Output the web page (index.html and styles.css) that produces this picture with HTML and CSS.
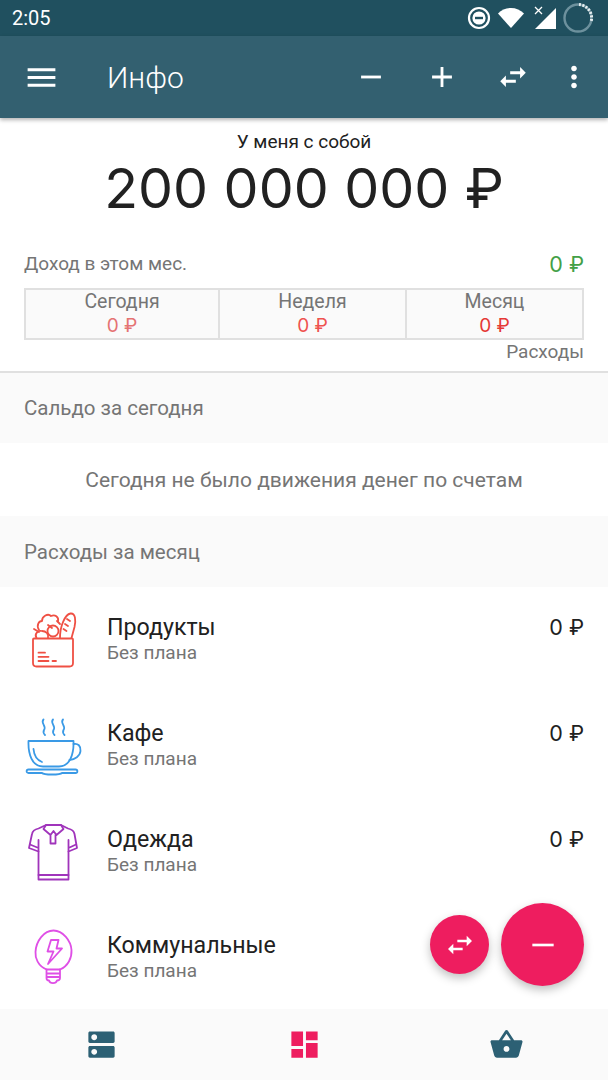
FILE: index.html
```html
<!DOCTYPE html>
<html lang="ru">
<head>
    <meta charset="UTF-8">
    <meta name="viewport" content="width=device-width, initial-scale=1.0">
    <title>Инфо</title>
    <link rel="stylesheet" href="styles.css">
</head>
<body>
<div class="screen">
    <div class="status-bar">
        <span class="clock">2:05</span>
        <div class="status-icons">
            <svg class="st-dnd" width="24" height="24" viewBox="0 0 24 24"><circle cx="12" cy="12" r="10" fill="none" stroke="#fff" stroke-width="2.2"/><circle cx="12" cy="12" r="6.6" fill="#fff"/><rect x="8" y="10.8" width="8" height="2.4" fill="#20505f"/></svg>
            <svg class="st-wifi" width="28" height="22" viewBox="0 0 28 22"><path d="M1 6.5C4.500 3 9 1 14 1s9.500 2 13 5.500L14 21z" fill="#fff"/></svg>
            <svg class="st-signal" width="24" height="26" viewBox="0 0 24 26"><path d="M23 3v21H2z" fill="#fff"/><path d="M2 2l7 7M9 2l-7 7" stroke="#20505f" stroke-width="3.500"/><path d="M2 2l7 7M9 2l-7 7" stroke="#fff" stroke-width="1.300"/></svg>
            <svg class="st-load" width="32" height="32" viewBox="0 0 32 32"><circle cx="16" cy="16" r="13.500" fill="none" stroke="#6d919d" stroke-width="2.400"/><path d="M17 2.500A13.500 13.500 0 0 1 29 20" fill="none" stroke="#e6eef0" stroke-width="3" stroke-dasharray="2 1.500"/></svg>
        </div>
    </div>

    <header class="app-bar">
        <button class="bar-btn menu-btn"><svg width="37" height="37" viewBox="0 0 24 24"><path d="M3 18h18v-2H3v2zm0-5h18v-2H3v2zm0-7v2h18V6H3z"/></svg></button>
        <h1 class="bar-title">Инфо</h1>
        <div class="bar-actions">
            <button class="bar-btn"><svg width="34" height="34" viewBox="0 0 24 24"><path d="M5 11h14v2H5z"/></svg></button>
            <button class="bar-btn"><svg width="34" height="34" viewBox="0 0 24 24"><path d="M19 13h-6v6h-2v-6H5v-2h6V5h2v6h6v2z"/></svg></button>
            <button class="bar-btn"><svg width="34" height="34" viewBox="0 0 24 24"><path d="M6.990 11L3 15l3.990 4v-3H14v-2H6.990v-3zM21 9l-3.990-4v3H10v2h7.010v3L21 9z"/></svg></button>
            <button class="bar-btn more-btn"><svg width="34" height="34" viewBox="0 0 24 24"><path d="M12 8c1.100 0 2-.9 2-2s-.9-2-2-2-2 .9-2 2 .9 2 2 2zm0 2c-1.100 0-2 .9-2 2s.9 2 2 2 2-.9 2-2-.9-2-2-2zm0 6c-1.100 0-2 .9-2 2s.9 2 2 2 2-.9 2-2-.9-2-2-2z"/></svg></button>
        </div>
    </header>

    <main class="content">
        <section class="summary">
            <div class="summary-label">У меня с собой</div>
            <div class="summary-total">200 000 000 ₽</div>
            <div class="income">
                <span>Доход в этом мес.</span>
                <span class="income-value">0 ₽</span>
            </div>
            <div class="periods">
                <div class="period period-day">
                    <div>Сегодня</div>
                    <div class="period-value">0 ₽</div>
                </div>
                <div class="period period-week">
                    <div>Неделя</div>
                    <div class="period-value">0 ₽</div>
                </div>
                <div class="period period-month">
                    <div>Месяц</div>
                    <div class="period-value">0 ₽</div>
                </div>
            </div>
            <div class="periods-caption">Расходы</div>
        </section>

        <h2 class="section-head section-head-top">Сальдо за сегодня</h2>
        <div class="empty-note">Сегодня не было движения денег по счетам</div>
        <h2 class="section-head">Расходы за месяц</h2>

        <div class="cat-list">
            <div class="cat-row">
                <svg class="cat-icon" width="60" height="60" viewBox="0 0 60 60" stroke="#ef5044">
                    <path d="M10 28.500c-.6 0-1 .5-1 1V53c0 2 1.500 3.500 3.500 3.500h33c2 0 3.500-1.500 3.500-3.500V29.500c0-.5-.4-1-1-1z"/>
                    <path d="M14.500 42.700H21M14.500 46.800H24.500M14.500 51H24.500M28.500 51H32"/>
                    <path d="M36 28C36 16 41 4.500 46.500 3.500C51.500 3 52 10 50.500 17L47.500 28"/>
                    <path d="M43 9l3 2M41 14l3 2M39.500 19l3 2"/>
                    <path d="M10 19l5 3M12.500 28C10 24 14 20 18 21C22 21 25 24 24 28"/>
                    <path d="M15 20C12 15 15 11 18 11C18 6 24 3 27 6C31 4 35 7 34 11"/>
                    <circle cx="29" cy="21" r="5.500"/>
                    <path d="M24 15l4 3M33 11l3 3"/>
                </svg>
                <div class="cat-text">
                    <div class="cat-name">Продукты</div>
                    <div class="cat-plan">Без плана</div>
                </div>
                <div class="cat-sum">0 ₽</div>
            </div>
            <div class="cat-row">
                <svg class="cat-icon" width="60" height="60" viewBox="0 0 60 60" stroke="#3a9ae6">
                    <path d="M4.500 25H49.500C50 38 46 50.500 35 50.500H19C8 50.500 4 38 4.500 25z"/>
                    <path d="M49.500 28C54 27 57 30 56.500 35C56 40 51 43.500 45.500 44"/>
                    <path d="M9.500 33C10 39 13 44 18 46"/>
                    <path d="M4.500 53.500H51.500C54 53.500 54 57 51.500 57H38C36 59 20 59 18 57H4.500C2 57 2 53.500 4.500 53.500z"/>
                    <path d="M19.500 3.500C16 7 23 10 20 14C19 16 20 18 21 19M29 3.500C25.500 7 32.500 10 29.500 14C28.500 16 29.500 18 30.500 19M39 3.500C35.500 7 42.500 10 39.500 14C38.500 16 39.500 18 40.500 19"/>
                </svg>
                <div class="cat-text">
                    <div class="cat-name">Кафе</div>
                    <div class="cat-plan">Без плана</div>
                </div>
                <div class="cat-sum">0 ₽</div>
            </div>
            <div class="cat-row">
                <svg class="cat-icon" width="60" height="60" viewBox="0 0 60 60" stroke="#a034bb">
                    <path d="M22 3H37L44 6.500C48 7.500 50 9 50.500 12L53 26L44.500 29.500V57.500H14.500V29.500L5 26L8 12C8.500 9 10.500 7.500 14.500 6.500z"/>
                    <path d="M14.500 18V29.500M44.500 18V29.500M14.500 53H44.500M6 22.500L14.500 26M52 22.500L44.500 26"/>
                    <path d="M22 3L19.500 7L26.500 13L29.500 9L32.500 13L39.500 7L37 3M26.500 13V21.500H31.500V13"/>
                </svg>
                <div class="cat-text">
                    <div class="cat-name">Одежда</div>
                    <div class="cat-plan">Без плана</div>
                </div>
                <div class="cat-sum">0 ₽</div>
            </div>
            <div class="cat-row">
                <svg class="cat-icon" width="60" height="60" viewBox="0 0 60 60" stroke="#df4fe6">
                    <path d="M22.500 41.500C14 38 11 30 11.500 24C12 13 20 2.500 29.500 2.500C39 2.500 47 13 47.500 22C48 30 44 38 36 41.500z"/>
                    <path d="M22.500 41.500V50C22.500 52 24 52.500 25 52.500C26 56 32 56 33 52.500C35 52.500 36 52 36 50V41.500M22.500 45.500H36M22.500 49H36"/>
                    <path d="M34.500 12H27L23.500 23.500H29.500L24 36L38 20.500H32.500z"/>
                </svg>
                <div class="cat-text">
                    <div class="cat-name">Коммунальные</div>
                    <div class="cat-plan">Без плана</div>
                </div>
            </div>
        </div>

        <button class="fab fab-small"><svg width="32" height="32" viewBox="0 0 24 24"><path d="M6.990 11L3 15l3.990 4v-3H14v-2H6.990v-3zM21 9l-3.990-4v3H10v2h7.010v3L21 9z"/></svg></button>
        <button class="fab fab-big"><svg width="32" height="32" viewBox="0 0 24 24"><path d="M4 11h16v2H4z"/></svg></button>
    </main>

    <nav class="bottom-nav">
        <div class="nav-item"><svg width="35" height="35" viewBox="0 0 24 24"><path d="M20 13H4c-.55 0-1 .45-1 1v6c0 .55.45 1 1 1h16c.55 0 1-.45 1-1v-6c0-.55-.45-1-1-1zM7 19c-1.100 0-2-.9-2-2s.9-2 2-2 2 .9 2 2-.9 2-2 2zM20 3H4c-.55 0-1 .45-1 1v6c0 .55.45 1 1 1h16c.55 0 1-.45 1-1V4c0-.55-.45-1-1-1zM7 9c-1.100 0-2-.9-2-2s.9-2 2-2 2 .9 2 2-.9 2-2 2z"/></svg></div>
        <div class="nav-item nav-active"><svg width="35" height="35" viewBox="0 0 24 24"><path d="M3 13h8V3H3v10zm0 8h8v-6H3v6zm10 0h8V11h-8v10zm0-18v6h8V3h-8z"/></svg></div>
        <div class="nav-item"><svg width="35" height="35" viewBox="0 0 24 24"><path d="M17.210 9l-4.380-6.560c-.19-.28-.51-.42-.83-.42-.32 0-.64.14-.83.43L6.790 9H2c-.55 0-1 .45-1 1 0 .09.01.18.04.27l2.540 9.270c.23.84 1 1.460 1.920 1.460h13c.92 0 1.690-.62 1.930-1.460l2.540-9.270L23 10c0-.55-.45-1-1-1h-4.790zM9 9l3-4.400L15 9H9zm3 8c-1.100 0-2-.9-2-2s.9-2 2-2 2 .9 2 2-.9 2-2 2z"/></svg></div>
    </nav>
</div>
</body>
</html>
```

FILE: styles.css
```css
body {
    margin: 0;
    background: #fff;
    font-family: Roboto, "Noto Sans", sans-serif;
}
.screen {
    display: flex;
    flex-direction: column;
    height: 1080px;
    overflow: hidden;
}

/* Status bar */
.status-bar {
    display: flex;
    align-items: center;
    justify-content: space-between;
    height: 36px;
    padding: 0 14px 0 12px;
    background: #20505f;
    color: #fff;
    flex-shrink: 0;
}
.clock {
    font-size: 20px;
}
.status-icons {
    display: flex;
    align-items: center;
}
.st-wifi {
    margin-left: 6px;
}
.st-signal {
    margin-left: 8px;
}
.st-load {
    margin-left: 5px;
}

/* App bar */
.app-bar {
    display: flex;
    align-items: center;
    height: 82px;
    background: #336070;
    box-shadow: 0 2px 4px rgba(0,0,0,0.3);
    flex-shrink: 0;
    position: relative;
    z-index: 2;
}
.bar-btn {
    display: flex;
    align-items: center;
    justify-content: center;
    width: 71px;
    padding: 0;
    background: none;
    border: none;
}
.bar-btn svg {
    fill: #fff;
}
.menu-btn {
    width: 37px;
    margin-left: 23px;
}
.bar-title {
    margin: 0 0 0 47px;
    font-size: 30px;
    font-weight: 300;
    color: #fff;
    flex: 1;
}
.bar-actions {
    display: flex;
    margin-right: 8px;
}
.more-btn {
    width: 53px;
    margin-left: -1px;
}

/* Main content */
.content {
    flex: 1;
    position: relative;
    min-height: 0;
    display: flex;
    flex-direction: column;
}
.summary {
    padding: 12px 24px 0;
    border-bottom: 2px solid #e0e0e0;
    height: 255px;
    box-sizing: border-box;
    flex-shrink: 0;
}
.summary-label {
    text-align: center;
    font-size: 19px;
    line-height: 24px;
    color: #212121;
}
.summary-total {
    text-align: center;
    font-family: Inter, Roboto, sans-serif;
    font-size: 55.500px;
    line-height: 68px;
    color: #212121;
}
.income {
    display: flex;
    justify-content: space-between;
    margin-top: 30px;
    font-size: 19px;
    line-height: 24px;
    color: #757575;
}
.income-value {
    font-family: Inter, Roboto, sans-serif;
    color: #43a047;
    font-size: 21.500px;
}
.periods {
    display: flex;
    margin-top: 12px;
    height: 52px;
    box-sizing: border-box;
    border: 2px solid #e0e0e0;
    background: #fafafa;
}
.period {
    text-align: center;
    font-size: 19.500px;
    line-height: 24px;
    color: #757575;
    border-right: 2px solid #e0e0e0;
}
.period:last-child {
    border-right: none;
}
.period-day {
    width: 192px;
}
.period-week {
    width: 185px;
}
.period-month {
    flex: 1;
}
.period-value {
    font-family: Inter, Roboto, sans-serif;
    font-size: 19px;
}
.period-day .period-value {
    color: #e57373;
}
.period-week .period-value {
    color: #ef5350;
}
.period-month .period-value {
    color: #e53935;
}
.periods-caption {
    text-align: right;
    font-size: 19px;
    line-height: 24px;
    color: #757575;
}
.section-head {
    margin: 0;
    padding: 0 24px;
    height: 71px;
    display: flex;
    align-items: center;
    background: #fafafa;
    font-size: 20.500px;
    font-weight: 400;
    color: #757575;
    flex-shrink: 0;
}
.section-head-top {
    height: 70px;
}
.empty-note {
    height: 73px;
    display: flex;
    align-items: center;
    justify-content: center;
    font-size: 21px;
    color: #757575;
    flex-shrink: 0;
}

/* Category list */
.cat-list {
    flex: 1;
    min-height: 0;
    overflow: hidden;
}
.cat-row {
    display: flex;
    align-items: center;
    height: 106px;
    padding: 0 24px;
}
.cat-icon {
    fill: none;
    stroke-width: 1.800;
    stroke-linecap: round;
    stroke-linejoin: round;
    flex-shrink: 0;
}
.cat-text {
    margin: 0 0 3px 23px;
    flex: 1;
}
.cat-name {
    font-size: 23.200px;
    line-height: 28px;
    color: #212121;
}
.cat-plan {
    font-size: 19px;
    line-height: 24px;
    color: #757575;
}
.cat-sum {
    font-family: Inter, Roboto, sans-serif;
    align-self: flex-start;
    margin-top: 26px;
    font-size: 21.500px;
    line-height: 28px;
    color: #212121;
}

/* Floating buttons */
.fab {
    position: absolute;
    display: flex;
    align-items: center;
    justify-content: center;
    padding: 0;
    border: none;
    border-radius: 50%;
    background: #ee1d5f;
    box-shadow: 0 4px 10px rgba(0,0,0,0.25);
}
.fab svg {
    fill: #fff;
}
.fab-small {
    width: 59px;
    height: 59px;
    right: 119px;
    bottom: 35px;
}
.fab-big {
    width: 83px;
    height: 83px;
    right: 24px;
    bottom: 23px;
}

/* Bottom navigation */
.bottom-nav {
    display: flex;
    height: 71px;
    background: #fafafa;
    flex-shrink: 0;
}
.nav-item {
    flex: 1;
    display: flex;
    align-items: center;
    justify-content: center;
}
.nav-item svg {
    fill: #2c6074;
}
.nav-active svg {
    fill: #ee1d5f;
}
```
